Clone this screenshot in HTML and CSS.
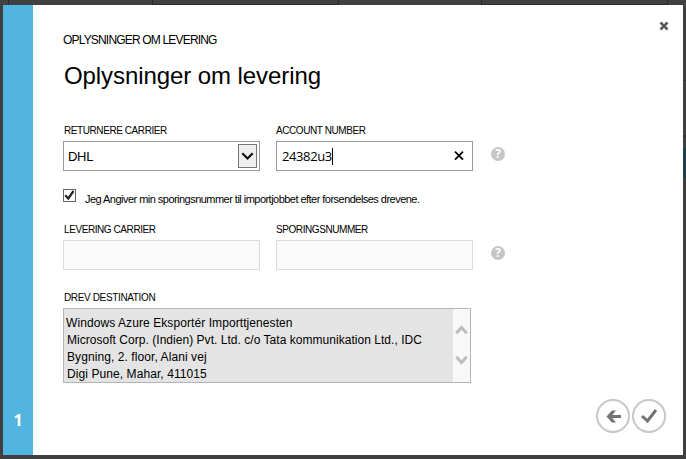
FILE: index.html
```html
<!DOCTYPE html>
<html lang="da">
<head>
<meta charset="utf-8">
<title>Oplysninger om levering</title>
<link rel="stylesheet" href="styles.css">
</head>
<body>
<div class="backdrop"><i class="tab tab-a"></i><i class="tab tab-b"></i><i class="tab tab-c"></i><i class="edge edge-a"></i><i class="edge edge-b"></i><i class="edge edge-c"></i></div>
<main class="dialog">
  <aside class="rail"><span>1</span></aside>
  <section class="content">
    <svg class="close" width="10" height="10" viewBox="0 0 10 10"><path d="M1.500 1.500l7 7M8.500 1.500l-7 7"/></svg>
    <p class="crumb">OPLYSNINGER OM LEVERING</p>
    <h1>Oplysninger om levering</h1>
    <div class="row">
      <div class="field">
        <label class="l-return">RETURNERE CARRIER</label>
        <div class="box select"><span>DHL</span>
          <span class="drop"><svg width="13" height="9" viewBox="0 0 13 9"><path d="M1.300 1.200l5.200 5.300 5.200-5.300"/></svg></span>
        </div>
      </div>
      <div class="field">
        <label class="l-account">ACCOUNT NUMBER</label>
        <div class="box account"><span class="value">24382u3</span><i class="caret"></i>
          <svg class="clear" width="10" height="10" viewBox="0 0 10 10"><path d="M1 .7l8 8M9 .7l-8 8"/></svg>
        </div>
      </div>
      <span class="help">?</span>
    </div>
    <div class="check">
      <span class="checkbox"><svg width="11" height="11" viewBox="0 0 11 11"><path d="M1.300 5.300l3 3.200 5.200-7.500"/></svg></span>
      <span class="check-text">Jeg Angiver min sporingsnummer til importjobbet efter forsendelses drevene.</span>
    </div>
    <div class="row">
      <div class="field">
        <label class="l-carrier">LEVERING CARRIER</label>
        <div class="box disabled"></div>
      </div>
      <div class="field">
        <label class="l-number">SPORINGSNUMMER</label>
        <div class="box disabled"></div>
      </div>
      <span class="help">?</span>
    </div>
    <div class="destination">
      <label class="l-dest">DREV DESTINATION</label>
      <div class="area">
        <div class="lines">
          <p class="line-a">Windows Azure Eksportér Importtjenesten</p>
          <p class="line-b">Microsoft Corp. (Indien) Pvt. Ltd. c/o Tata kommunikation Ltd., IDC</p>
          <p class="line-c">Bygning, 2. floor, Alani vej</p>
          <p class="line-d">Digi Pune, Mahar, 411015</p>
        </div>
        <div class="scroll">
          <svg width="13" height="10" viewBox="0 0 13 10"><path d="M1.300 8.300l5.200-5.700 5.200 5.700"/></svg>
          <svg width="13" height="10" viewBox="0 0 13 10"><path d="M1.300 1.700l5.200 5.700 5.200-5.700"/></svg>
        </div>
      </div>
    </div>
    <div class="actions">
      <svg width="34" height="34" viewBox="0 0 34 34"><circle cx="17" cy="17" r="16"/><path d="M25 17.500H13"/><path class="head" d="M10.500 17.500l5.500-6h4l-5 6 5 6h-4z"/></svg>
      <svg width="34" height="34" viewBox="0 0 34 34"><circle cx="17" cy="17" r="16"/><path d="M10 17l5.500 5 8.500-11"/></svg>
    </div>
  </section>
</main>
</body>
</html>
```
FILE: styles.css
```css
* { box-sizing: border-box; }
body {
  margin: 0;
  width: 686px;
  height: 459px;
  padding: 5px 3px 4px;
  overflow: hidden;
  background: #404040;
  color: #000;
  font-family: "Liberation Sans", Arial, sans-serif;
}
p, h1 { margin: 0; font-weight: normal; white-space: nowrap; }
svg { display: block; fill: none; }

.backdrop i { position: absolute; }
.tab { top: 0; height: 5px; border: 1px solid #292929; border-top: 0; }
.tab-a { left: 8px; width: 145px; border-width: 0 1px; }
.tab-b { left: 152px; width: 187px; }
.tab-c { left: 481px; width: 187px; }
.edge { left: 683px; width: 3px; }
.edge-a { top: 80px; height: 1px; background: #303030; }
.edge-b { top: 135px; height: 3px; background: #333; }
.edge-c { top: 148px; height: 30px; background: #203e48; }

.dialog { position: relative; display: flex; width: 680px; height: 450px; background: #fff; }
.rail {
  display: flex;
  align-items: flex-end;
  justify-content: center;
  width: 30px;
  padding-bottom: 25px;
  background: #52b5e0;
  color: #fff;
  font: bold 16px/20px "Open Sans", sans-serif;
}
.content { flex: 1; padding: 27px 0 0 30px; }
.close { position: absolute; left: 656px; top: 16px; stroke: #5b5b5b; stroke-width: 2.6; }
.crumb { font-size: 12px; line-height: 16px; letter-spacing: -0.82px; }
h1 { margin-top: 14px; padding-left: 1px; font-size: 24px; line-height: 28px; letter-spacing: -0.08px; }

.row { display: flex; align-items: flex-end; }
h1 + .row { margin-top: 34px; }
.field { width: 197px; margin-right: 16px; }
label { display: block; height: 17px; padding: 1px 0 0 1px; font-size: 10px; line-height: 12px; letter-spacing: -0.42px; white-space: nowrap; }
.field + .field label { padding-left: 0; }
.l-dest { letter-spacing: -0.36px; }
.box { display: flex; align-items: center; width: 197px; height: 30px; border: 1px solid #9a9a9a; background: #fff; }
.box.disabled { border-color: #dadada; background: #fafafa; }
.select { justify-content: space-between; padding: 0 2px 0 4px; font-size: 13px; letter-spacing: -0.3px; }
.drop { display: flex; justify-content: center; width: 19px; height: 24px; padding-top: 7px; border: 1px solid #777; background: #efefef; }
.drop path { stroke: #111; stroke-width: 2.2; }
.account { padding: 0 8px 0 5px; font: 13px "Open Sans", sans-serif; }
.value { letter-spacing: -0.4px; }
.caret { width: 1px; height: 17px; background: #000; }
.clear { margin-left: auto; stroke: #000; stroke-width: 1.7; }
.help {
  width: 14px;
  height: 14px;
  margin: 0 0 10px 2px;
  border-radius: 50%;
  background: #c6c6c6;
  color: #fff;
  font: bold 12px/14px "Open Sans", sans-serif;
  text-align: center;
}

.check { display: flex; height: 52px; padding-top: 18px; }
.checkbox { width: 13px; height: 13px; border: 1px solid #666; }
.checkbox path { stroke: #222; stroke-width: 2.2; }
.check-text { margin: 3px 0 0 9px; font-size: 11px; line-height: 15px; letter-spacing: -0.53px; white-space: nowrap; }

.destination { margin-top: 21px; }
.area { display: flex; justify-content: space-between; width: 408px; height: 75px; border: 1px solid #b5b5b5; background: #e4e4e4; }
.lines { padding: 6px 0 0 3px; font-size: 12px; line-height: 17px; letter-spacing: 0.08px; }
.line-a { margin-left: -1px; }
.line-b { letter-spacing: 0.035px; }
.scroll { display: flex; flex-direction: column; gap: 20px; width: 17px; padding: 16px 0 0 2px; background: #f8f8f8; }
.scroll path { stroke: #bdbdbd; stroke-width: 3; }

.actions { position: absolute; right: 17px; bottom: 22px; display: flex; gap: 2px; }
.actions circle { stroke: #c8c8c8; stroke-width: 2; }
.actions path { stroke: #737373; stroke-width: 3; }
.actions .head { fill: #737373; stroke: none; }
```
